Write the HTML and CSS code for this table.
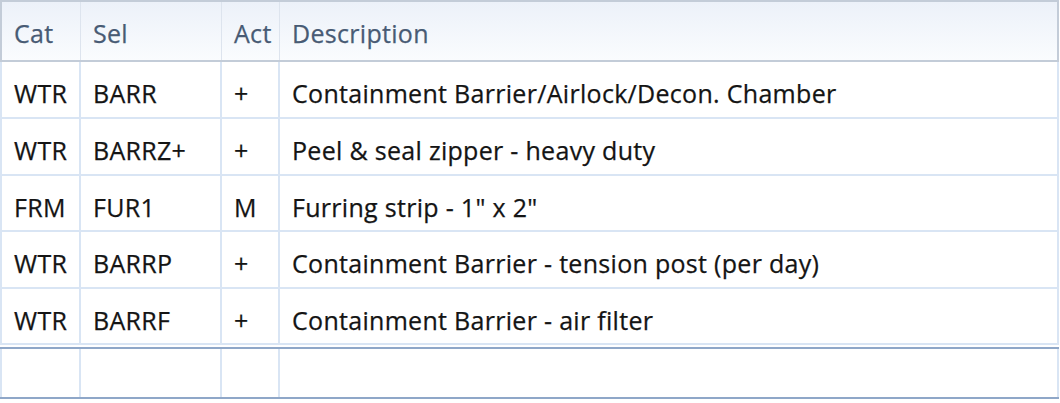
FILE: index.html
```html
<!DOCTYPE html>
<html>
<head>
<meta charset="utf-8">
<link rel="stylesheet" href="styles.css">
</head>
<body>
<div class="grid">
  <div class="row head">
    <div class="cell c-cat">Cat</div>
    <div class="cell c-sel">Sel</div>
    <div class="cell c-act">Act</div>
    <div class="cell c-desc">Description</div>
  </div>
  <div class="row r1">
    <div class="cell c-cat">WTR</div>
    <div class="cell c-sel">BARR</div>
    <div class="cell c-act">+</div>
    <div class="cell c-desc">Containment Barrier/Airlock/Decon. Chamber</div>
  </div>
  <div class="row r2">
    <div class="cell c-cat">WTR</div>
    <div class="cell c-sel">BARRZ+</div>
    <div class="cell c-act">+</div>
    <div class="cell c-desc">Peel &amp; seal zipper - heavy duty</div>
  </div>
  <div class="row r3">
    <div class="cell c-cat">FRM</div>
    <div class="cell c-sel">FUR1</div>
    <div class="cell c-act">M</div>
    <div class="cell c-desc">Furring strip - 1" x 2"</div>
  </div>
  <div class="row r4">
    <div class="cell c-cat">WTR</div>
    <div class="cell c-sel">BARRP</div>
    <div class="cell c-act">+</div>
    <div class="cell c-desc">Containment Barrier - tension post (per day)</div>
  </div>
  <div class="row r5">
    <div class="cell c-cat">WTR</div>
    <div class="cell c-sel">BARRF</div>
    <div class="cell c-act">+</div>
    <div class="cell c-desc">Containment Barrier - air filter</div>
  </div>
  <div class="row newrow">
    <div class="cell c-cat"></div>
    <div class="cell c-sel"></div>
    <div class="cell c-act"></div>
    <div class="cell c-desc"></div>
  </div>
</div>
</body>
</html>
```

FILE: styles.css
```css
html, body {
  margin: 0;
  padding: 0;
  background: #ffffff;
}

body {
  font-family: "Open Sans", "Noto Sans", "Liberation Sans", sans-serif;
  font-size: 25px;
  letter-spacing: 0.3px;
  color: #141414;
  -webkit-text-stroke: 0.25px currentColor;
}

.grid {
  width: 1059px;
  display: flex;
  flex-direction: column;
}

.row {
  display: grid;
  grid-template-columns: 81px 141px 58px 779px;
  box-sizing: border-box;
}

.cell {
  box-sizing: border-box;
  display: flex;
  align-items: center;
  padding-left: 12px;
  border-right: 2px solid #d9e5f4;
  border-bottom: 2px solid #d9e5f4;
  white-space: nowrap;
  overflow: hidden;
}

.cell.c-cat {
  border-left: 2px solid #d9e5f4;
  padding-left: 12px;
}

/* header */
.head {
  height: 62px;
  background: linear-gradient(#ecf1f9, #fafcfe);
  border-top: 2px solid #c3ccd8;
  border-bottom: 2px solid #c3ccd8;
  border-right: 2px solid #c3ccd8;
  color: #485b74;
}

.head .cell {
  border-bottom: none;
  border-right: 1px solid #dde4ee;
  padding-top: 3px;
}

.head .cell.c-cat {
  border-left: 2px solid #c3ccd8;
}

.head .cell.c-desc {
  border-right: none;
}

.r1 { height: 57px; }
.r2 { height: 57px; }
.r3 { height: 56px; }
.r4 { height: 57px; }
.r5 { height: 56px; }

.r1 .cell, .r2 .cell, .r3 .cell, .r4 .cell, .r5 .cell {
  padding-top: 7px;
}

.newrow {
  height: 52px;
  margin-top: 2px;
  border-top: 2px solid #8fa7c8;
  border-bottom: 2px solid #8fa7c8;
  box-shadow: 0 1px 0 #ffffff, 0 3px 0 #d9e5f4;
}

.newrow .cell {
  border-bottom: none;
}
```
